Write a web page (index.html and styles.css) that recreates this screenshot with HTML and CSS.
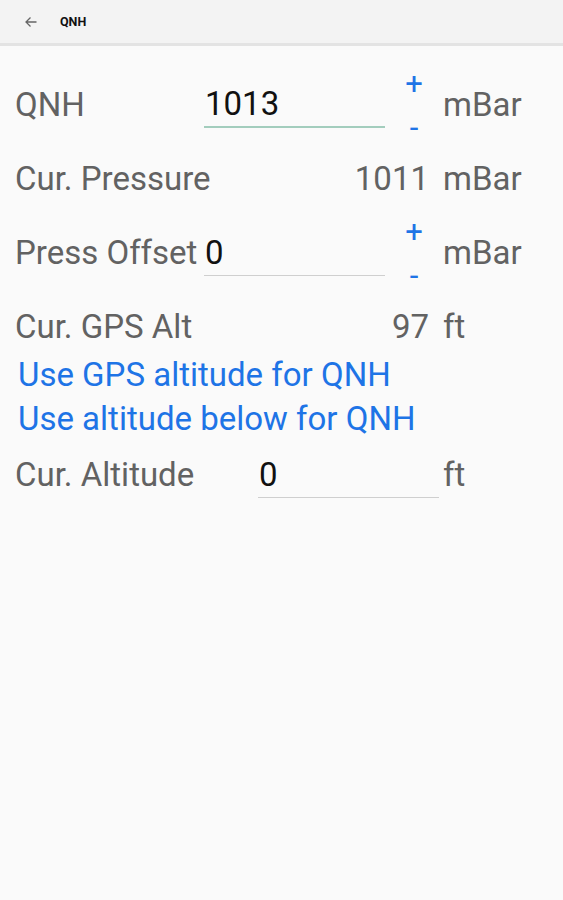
FILE: index.html
```html
<!DOCTYPE html>
<html lang="en">
<head>
    <meta charset="UTF-8">
    <meta name="viewport" content="width=device-width, initial-scale=1.0">
    <title>QNH</title>
    <link rel="stylesheet" href="styles.css">
</head>
<body>
    <div class="toolbar">
        <svg class="back" width="14" height="12" viewBox="0 0 14 12">
            <path d="M12.5 6 H2 M6.5 1.5 L2 6 L6.5 10.5" fill="none" stroke="#666" stroke-width="1.3"/>
        </svg>
        <span class="title">QNH</span>
    </div>

    <div class="content">
        <div class="grid">
            <span class="label">QNH</span>
            <input class="field focused" type="text" value="1013">
            <div class="pm"><span class="plus">+</span><span class="minus">-</span></div>
            <span class="unit">mBar</span>

            <span class="label">Cur. Pressure</span>
            <span class="value">1011</span>
            <span class="unit">mBar</span>

            <span class="label">Press Offset</span>
            <input class="field" type="text" value="0">
            <div class="pm"><span class="plus">+</span><span class="minus">-</span></div>
            <span class="unit">mBar</span>

            <span class="label">Cur. GPS Alt</span>
            <span class="value">97</span>
            <span class="unit">ft</span>
        </div>

        <div class="links">
            <div class="link">Use GPS altitude for QNH</div>
            <div class="link">Use altitude below for QNH</div>
        </div>

        <div class="alt-row">
            <span class="label alt-label">Cur. Altitude</span>
            <input class="field" type="text" value="0">
            <span class="unit">ft</span>
        </div>
    </div>
</body>
</html>
```

FILE: styles.css
```css
body {
    margin: 0;
    background-color: #fafafa;
    font-family: Roboto, "Noto Sans", Arial, sans-serif;
}
.toolbar {
    height: 43px;
    display: flex;
    align-items: center;
    background-color: #f3f3f3;
    border-bottom: 3px solid #e3e3e3;
}
.back {
    margin-left: 24px;
}
.title {
    margin-left: 22px;
    font-size: 12.5px;
    font-weight: bold;
    color: #111;
}
.content {
    padding: 35px 0 0 15px;
}
.grid {
    display: grid;
    grid-template-columns: 189px 181px 58px auto;
    grid-auto-rows: 48px;
    row-gap: 26px;
}
.label, .unit, .value, .field {
    font-size: 33px;
    line-height: 48px;
}
.label, .unit, .value {
    color: #626262;
    white-space: nowrap;
}
.value {
    grid-column: 2 / 4;
    text-align: right;
    padding-right: 14px;
}
.field {
    width: 181px;
    height: 48px;
    box-sizing: border-box;
    padding: 2px 0 0 1px;
    border: none;
    border-bottom: 1px solid #cfcfcf;
    background: transparent;
    font-family: inherit;
    color: #111;
    outline: none;
    margin-top: -1px;
}
.field.focused {
    border-bottom: 2px solid #a3cdbd;
}
.pm {
    display: flex;
    flex-direction: column;
    justify-content: space-between;
    align-items: center;
    width: 58px;
    height: 48px;
    color: #1e74e6;
    font-size: 31px;
}
.pm span {
    height: 20px;
    line-height: 20px;
}
.pm .plus {
    margin: -7px 0 0;
}
.pm .minus {
    margin: 0 0 -9px;
}
.links {
    margin-top: 2px;
    padding-left: 3px;
}
.link {
    color: #1e74e6;
    font-size: 33px;
    line-height: 44px;
}
.alt-row {
    display: flex;
    margin-top: 10px;
}
.alt-label {
    width: 243px;
}
.alt-row .unit {
    margin-left: 4px;
}
```
